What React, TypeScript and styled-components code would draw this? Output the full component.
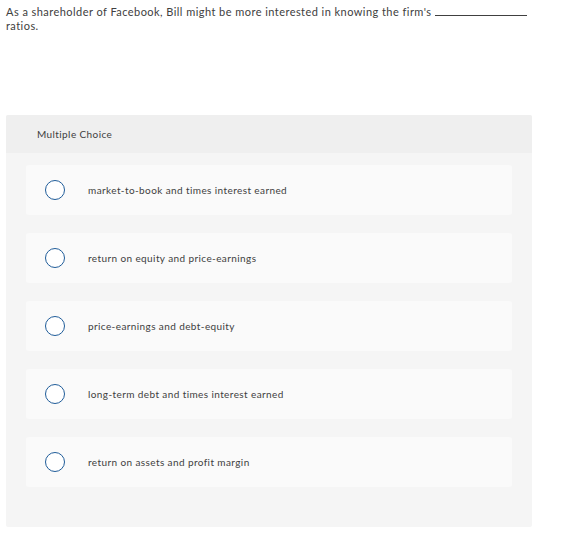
import styled, { createGlobalStyle } from 'styled-components';

const GlobalStyle = createGlobalStyle`
  body {
    margin: 0;
    background: #ffffff;
    font-family: Lato, "Open Sans", Arial, sans-serif;
    color: #404040;
  }
`;

const choices = [
  'market-to-book and times interest earned',
  'return on equity and price-earnings',
  'price-earnings and debt-equity',
  'long-term debt and times interest earned',
  'return on assets and profit margin',
];

function App() {
  return (
    <>
      <GlobalStyle />
      <Page>
        <Question>
          As a shareholder of Facebook, Bill might be more interested in knowing the firm's <Blank /> ratios.
        </Question>
        <Panel>
          <PanelHeader>Multiple Choice</PanelHeader>
          <ChoiceList>
            {choices.map((choice) => (
              <Choice key={choice}>
                <Radio />
                <ChoiceLabel>{choice}</ChoiceLabel>
              </Choice>
            ))}
          </ChoiceList>
        </Panel>
      </Page>
    </>
  );
}

export default App;

const Page = styled.div`
  padding: 5px 43px 14px 6px;
`;

const Question = styled.p`
  margin: 0;
  width: 526px;
  font-size: 11px;
  letter-spacing: 0.45px;
  line-height: 13.5px;
  color: #404040;
`;

const Blank = styled.span`
  display: inline-block;
  width: 92px;
  border-bottom: 1px solid #404040;
  vertical-align: baseline;
`;

const Panel = styled.div`
  margin-top: 83px;
  width: 526px;
  background: #f5f5f5;
  border-radius: 2px;
  padding-bottom: 40px;
`;

const PanelHeader = styled.div`
  height: 38px;
  display: flex;
  align-items: center;
  padding-left: 31px;
  background: #efefef;
  border-radius: 2px 2px 0 0;
  font-size: 10px;
  letter-spacing: 0.4px;
  color: #404040;
`;

const ChoiceList = styled.div`
  display: flex;
  flex-direction: column;
  gap: 18px;
  padding: 12px 20px 0;
`;

const Choice = styled.div`
  height: 50px;
  display: flex;
  align-items: center;
  background: #fafafa;
  border-radius: 3px;
  padding-left: 19px;
`;

const Radio = styled.span`
  width: 20px;
  height: 20px;
  box-sizing: border-box;
  border: 1.3px solid #1f5c99;
  border-radius: 50%;
  background: #ffffff;
  flex-shrink: 0;
`;

const ChoiceLabel = styled.span`
  margin-left: 23px;
  font-size: 10px;
  letter-spacing: 0.4px;
  color: #404040;
`;
